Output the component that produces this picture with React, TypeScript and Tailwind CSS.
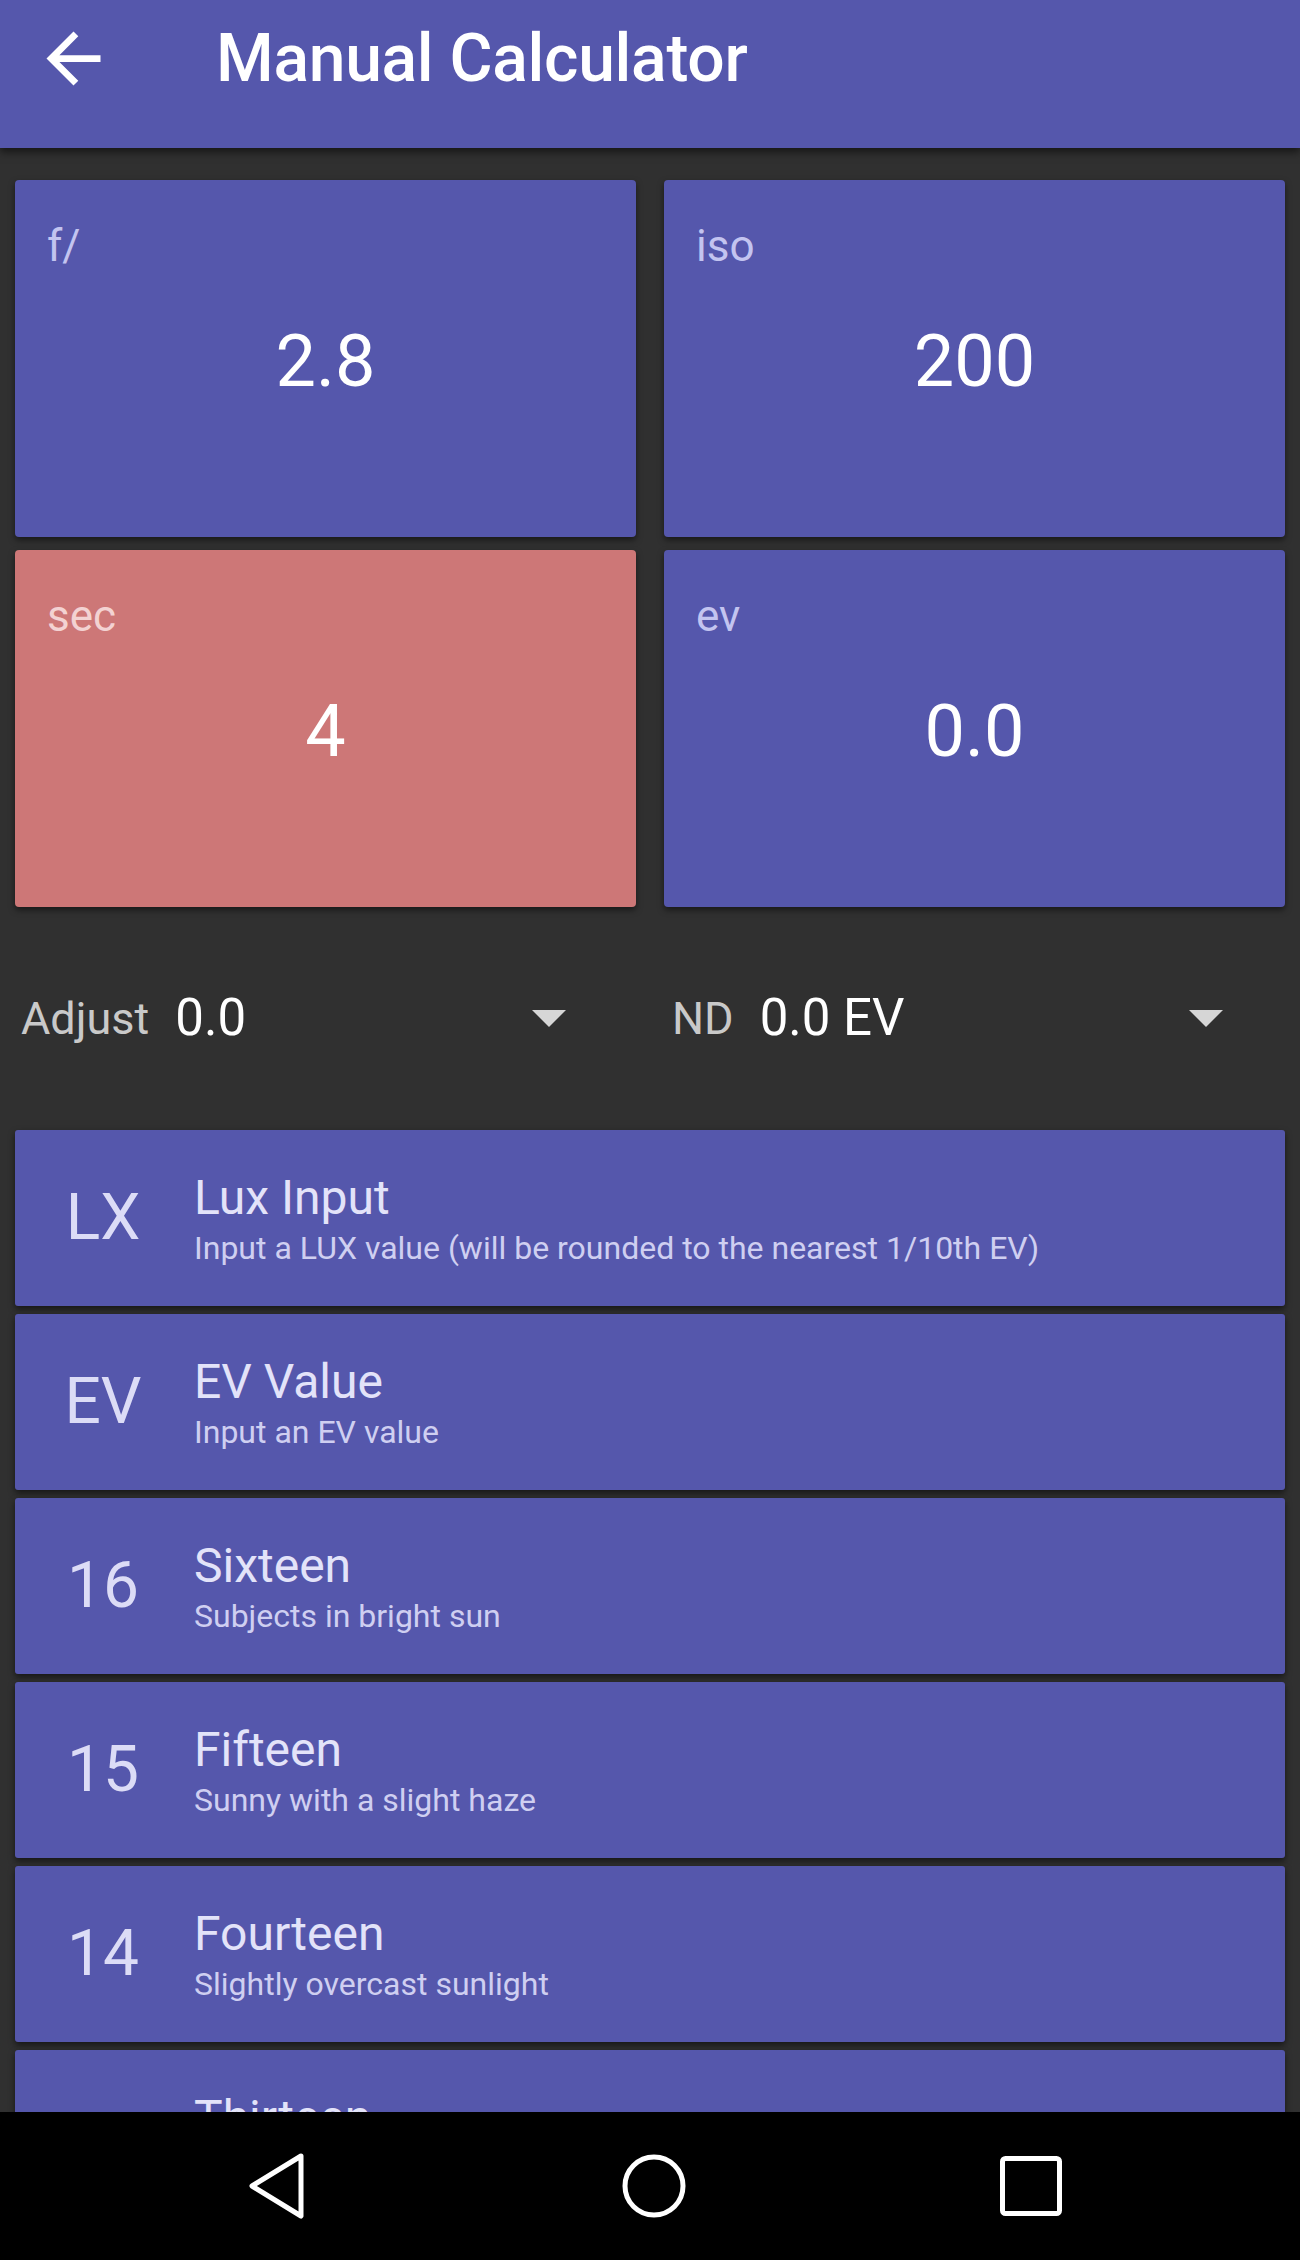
const tiles = [
  { label: 'f/', value: '2.8', tone: 'bg-[#5557ac]', labelTone: 'text-[#c3c4f0]' },
  { label: 'iso', value: '200', tone: 'bg-[#5557ac]', labelTone: 'text-[#c3c4f0]' },
  { label: 'sec', value: '4', tone: 'bg-[#cd7777]', labelTone: 'text-[#f3d2d2]' },
  { label: 'ev', value: '0.0', tone: 'bg-[#5557ac]', labelTone: 'text-[#c3c4f0]' },
]

const presets = [
  { badge: 'LX', title: 'Lux Input', desc: 'Input a LUX value (will be rounded to the nearest 1/10th EV)' },
  { badge: 'EV', title: 'EV Value', desc: 'Input an EV value' },
  { badge: '16', title: 'Sixteen', desc: 'Subjects in bright sun' },
  { badge: '15', title: 'Fifteen', desc: 'Sunny with a slight haze' },
  { badge: '14', title: 'Fourteen', desc: 'Slightly overcast sunlight' },
  { badge: '13', title: 'Thirteen', desc: 'Overcast' },
]

function BackArrow() {
  return (
    <svg viewBox="0 0 24 24" className="h-[81px] w-[81px] fill-white">
      <path d="M20 11H7.83l5.59-5.59L12 4l-8 8 8 8 1.41-1.41L7.83 13H20v-2z" />
    </svg>
  )
}

function Caret() {
  return (
    <svg viewBox="0 0 34 18" className="h-[18px] w-[34px] fill-[#d6d6d6]">
      <path d="M0 0h34L17 17z" />
    </svg>
  )
}

function Spinner({ label, value }: { label: string; value: string }) {
  return (
    <div className="flex items-center">
      <span className="text-[45px] text-[#c9c9c9]">{label}</span>
      <span className="ml-[26px] text-[51px] text-white">{value}</span>
      <div className="ml-auto">
        <Caret />
      </div>
    </div>
  )
}

export default function App() {
  return (
    <div className="flex h-[2260px] w-[1300px] flex-col overflow-hidden bg-[#303030] font-['Roboto','Liberation_Sans',sans-serif]">
      <header className="relative z-10 h-[148px] shrink-0 bg-[#5557ac] shadow-[0_4px_8px_rgba(0,0,0,0.55)]">
        <div className="flex h-[116px] items-center">
          <div className="ml-[33px]">
            <BackArrow />
          </div>
          <h1 className="ml-[102px] text-[66px] font-medium tracking-[-0.3px] text-white">Manual Calculator</h1>
        </div>
      </header>

      <main className="min-h-0 flex-1 overflow-hidden px-[15px] pt-[32px]">
        <div className="grid grid-cols-2 gap-x-[28px] gap-y-[13px]">
          {tiles.map((t) => (
            <div
              key={t.label}
              className={`flex h-[357px] flex-col rounded-[4px] px-[32px] pt-[40px] pb-[86px] shadow-[0_3px_6px_rgba(0,0,0,0.5)] ${t.tone}`}
            >
              <span className={`h-[52px] text-[44px] leading-[52px] ${t.labelTone}`}>{t.label}</span>
              <div className="flex flex-1 items-center justify-center text-[72px] text-white">{t.value}</div>
            </div>
          ))}
        </div>

        <div className="grid h-[223px] grid-cols-2 items-center">
          <div className="pl-[6px] pr-[84px]">
            <Spinner label="Adjust" value="0.0" />
          </div>
          <div className="pl-[22px] pr-[62px]">
            <Spinner label="ND" value="0.0 EV" />
          </div>
        </div>

        <div className="flex flex-col gap-[8px]">
          {presets.map((p) => (
            <div
              key={p.badge}
              className="flex h-[176px] shrink-0 items-center rounded-[3px] bg-[#5557ac] shadow-[0_3px_6px_rgba(0,0,0,0.55)]"
            >
              <div className="ml-[30px] w-[116px] text-center text-[64px] text-[#dcdcf6]">{p.badge}</div>
              <div className="ml-[33px] flex flex-col">
                <span className="text-[48px] leading-[56px] text-[#e3e3f9]">{p.title}</span>
                <span className="mt-[4px] text-[32px] leading-[37px] text-[#cfcff1]">{p.desc}</span>
              </div>
            </div>
          ))}
        </div>
      </main>

      <nav className="flex h-[148px] shrink-0 items-center bg-black">
        <div className="flex flex-1 justify-center pl-[88px]">
          <svg viewBox="0 0 60 68" className="h-[68px] w-[60px] fill-none stroke-white stroke-[5]" strokeLinejoin="round">
            <path d="M54 4L5 34l49 30z" />
          </svg>
        </div>
        <div className="flex flex-1 justify-center">
          <svg viewBox="0 0 68 68" className="h-[68px] w-[68px] fill-none stroke-white stroke-[5]">
            <circle cx="34" cy="34" r="29" />
          </svg>
        </div>
        <div className="flex flex-1 justify-center pr-[80px]">
          <svg viewBox="0 0 64 62" className="h-[62px] w-[64px] fill-none stroke-white stroke-[5]">
            <rect x="3.5" y="3.5" width="57" height="55" rx="3" />
          </svg>
        </div>
      </nav>
    </div>
  )
}
